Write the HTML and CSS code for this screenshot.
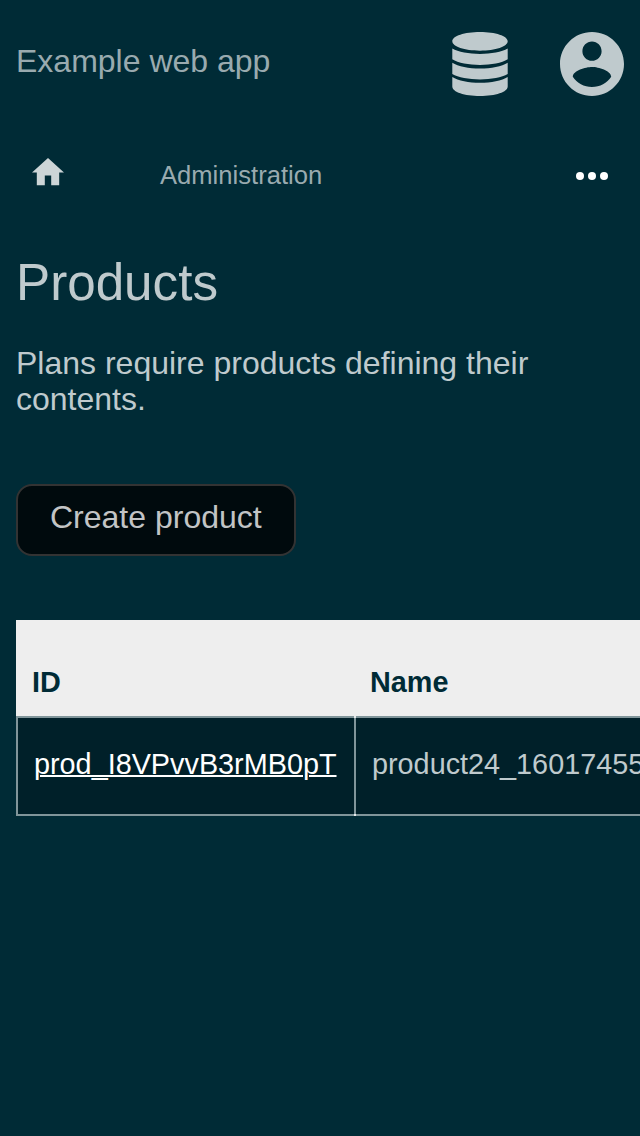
FILE: index.html
```html
<!DOCTYPE html>
<html lang="en">
<head>
<meta charset="utf-8">
<title>Products</title>
<link rel="stylesheet" href="styles.css">
</head>
<body>
<header class="header">
  <span class="app-name">Example web app</span>
  <div class="menus">
    <svg class="icon-database" viewBox="0 0 56 64"><path d="M.3 9.300C.3 4 12.500 0 28 0S55.700 4 55.700 9.300 43.500 18.700 28 18.700 .3 14.600 .3 9.300zM.3 16.600C6 20 17 21.900 28 21.900S50 20 55.700 16.600V27.300C50 31 39 32.900 28 32.900S6 31 .3 27.300zM.3 30.700C6 34.500 17 36.500 28 36.500S50 34.500 55.700 30.700V42C50 45.500 39 47.400 28 47.400S6 45.500 .3 42zM.3 45C6 48.800 17 50.800 28 50.800S50 48.800 55.700 45V54.500C55.700 60 43.500 64 28 64S.3 60 .3 54.500z"/></svg>
    <svg class="icon-account" viewBox="2 2 20 20"><path d="M12 2C6.480 2 2 6.480 2 12s4.480 10 10 10 10-4.480 10-10S17.520 2 12 2zm0 3c1.660 0 3 1.340 3 3s-1.340 3-3 3-3-1.340-3-3 1.340-3 3-3zm0 14.200c-2.500 0-4.710-1.280-6-3.220.03-1.990 4-3.080 6-3.080 1.990 0 5.970 1.090 6 3.080-1.290 1.940-3.500 3.220-6 3.220z"/></svg>
  </div>
</header>
<nav class="navbar">
  <svg class="icon-home" viewBox="2 3 20 17"><path d="M10 20v-6h4v6h5v-8h3L12 3 2 12h3v8z"/></svg>
  <span class="crumb">Administration</span>
  <svg class="icon-more" viewBox="0 0 32 8"><circle cx="4" cy="4" r="4"/><circle cx="16" cy="4" r="4"/><circle cx="28" cy="4" r="4"/></svg>
</nav>
<main class="content">
  <h1 class="title">Products</h1>
  <p class="intro">Plans require products defining their contents.</p>
  <a class="button">Create product</a>
  <table class="products">
    <thead><tr><th>ID</th><th>Name</th></tr></thead>
    <tbody><tr><td><a class="link">prod_I8VPvvB3rMB0pT</a></td><td>product24_16017455</td></tr></tbody>
  </table>
</main>
</body>
</html>
```
FILE: styles.css
```css
* { box-sizing: border-box; }
body {
  margin: 0;
  height: 1136px;
  overflow: hidden;
  background: #002b36;
  color: #bfcacd;
  font: 32px/36px "Liberation Sans", Arial, sans-serif;
}
svg { display: block; fill: currentColor; flex: none; }
.header {
  display: flex;
  justify-content: space-between;
  height: 128px;
  padding: 32px 16px;
}
.app-name { padding-top: 11px; color: #99aaaf; }
.menus { display: flex; gap: 52px; }
.icon-database { width: 56px; height: 64px; }
.icon-account { width: 64px; height: 64px; }
.navbar {
  display: flex;
  align-items: center;
  height: 96px;
  padding: 0 32px;
}
.icon-home { width: 32px; height: 27.200px; color: #ccd5d7; margin-bottom: 8px; }
.crumb { margin: 0 0 2px 96px; color: #99aaaf; font-size: 25.600px; }
.icon-more { width: 32px; height: 8px; margin-left: auto; color: #fff; }
.content { padding: 29px 0 0 16px; }
.title { margin: 0; font-size: 51.200px; line-height: 60px; font-weight: 400; }
.intro { margin: 32px 16px 0 0; }
.button {
  display: block;
  width: 280px;
  height: 72px;
  margin-top: 67px;
  padding: 13px 32px;
  border: 2px solid #333;
  border-radius: 16px;
  background: #000a0d;
  color: #c2c4c5;
  white-space: nowrap;
}
.products {
  width: 720px;
  margin-top: 64px;
  border-collapse: separate;
  border-spacing: 0;
  table-layout: fixed;
  font-size: 28.800px;
  line-height: 32px;
  white-space: nowrap;
}
.products th {
  height: 96px;
  padding: 46px 16px 18px;
  background: #eee;
  color: #002b36;
  text-align: left;
}
.products th:first-child { width: 338px; }
.products td {
  position: relative;
  height: 100px;
  padding: 30px 16px 34px;
  background: #002029;
  border: 2px solid #80959a;
  border-right: 0;
}
/* Bright ends where the column divider crosses the row borders */
.products td + td::before {
  content: "";
  position: absolute;
  inset: -2px auto -2px -2px;
  width: 2px;
  border: solid #e6eaeb;
  border-width: 2px 0;
}
.link { color: #fff; text-decoration: underline 2px; }
```
